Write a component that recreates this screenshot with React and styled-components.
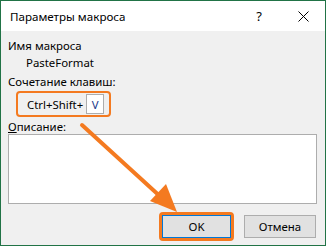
import styled, { createGlobalStyle } from "styled-components";

const Global = createGlobalStyle`
  html, body {
    margin: 0;
    padding: 0;
    background: #ffffff;
  }
  * {
    box-sizing: border-box;
  }
`;

const Dialog = styled.div`
  position: relative;
  width: 326px;
  height: 246px;
  border: 1px solid #217346;
  background: #f0f0f0;
  font-family: "Noto Sans", "Liberation Sans", sans-serif;
  font-size: 11.4px;
  color: #000;
  display: flex;
  flex-direction: column;
  overflow: hidden;
`;

const TitleBar = styled.div`
  height: 30px;
  flex: none;
  background: #ffffff;
  display: flex;
  align-items: center;
  padding-left: 9px;
`;

const Title = styled.div`
  flex: 1;
  font-size: 11.6px;
  color: #000;
`;

const TitleButton = styled.div`
  width: 44px;
  height: 30px;
  display: flex;
  align-items: center;
  justify-content: center;
  font-size: 13px;
  color: #000;
`;

const Body = styled.div`
  flex: 1;
  padding: 6px 7px 0 7px;
  display: flex;
  flex-direction: column;
`;

const Label = styled.div`
  height: 17px;
  line-height: 17px;
  margin-top: ${(p) => p.$mt || 0}px;
`;

const Value = styled.div`
  height: 17px;
  line-height: 17px;
  padding-left: 18px;
`;

const Highlight = styled.div`
  align-self: flex-start;
  height: 26px;
  margin-left: 8px;
  margin-top: 1px;
  border: 2px solid #f47a20;
  border-radius: 4px;
  padding: 0 5px 0 9px;
  display: flex;
  align-items: center;
  gap: 3px;
`;

const KeyInput = styled.div`
  width: 18px;
  height: 20px;
  background: #fff;
  border: 1px solid #adadad;
  display: flex;
  align-items: center;
  justify-content: center;
  color: #1a3a8a;
`;

const Under = styled.span`
  text-decoration: underline;
`;

const TextArea = styled.div`
  height: 70px;
  flex: none;
  margin-top: -1px;
  margin-right: 1px;
  background: #fff;
  border: 1px solid #adadad;
`;

const Buttons = styled.div`
  display: flex;
  justify-content: flex-end;
  align-items: center;
  gap: 10px;
  margin-top: 8px;
  padding-right: 2px;
`;

const OkWrap = styled.div`
  border: 3px solid #f47a20;
  border-radius: 4px;
`;

const Button = styled.div`
  width: ${(p) => p.$w}px;
  height: 23px;
  display: flex;
  align-items: center;
  justify-content: center;
  background: #e1e1e1;
  border: 1px solid ${(p) => (p.$primary ? "#0078d7" : "#adadad")};
`;

const Overlay = styled.svg`
  position: absolute;
  left: -1px;
  top: -1px;
  pointer-events: none;
`;

export default function App() {
  return (
    <>
      <Global />
      <Dialog>
        <TitleBar>
          <Title>Параметры макроса</Title>
          <TitleButton>?</TitleButton>
          <TitleButton>
            <svg width="11" height="11" viewBox="0 0 11 11">
              <path d="M0.5 0.5L10.5 10.5M10.5 0.5L0.5 10.5" stroke="#000" strokeWidth="1" />
            </svg>
          </TitleButton>
        </TitleBar>
        <Body>
          <Label>Имя макроса</Label>
          <Value>PasteFormat</Value>
          <Label $mt={2}>Сочетание клавиш:</Label>
          <Highlight>
            <span>Ctrl+Shift+</span>
            <KeyInput>V</KeyInput>
          </Highlight>
          <Label $mt={1}>
            <Under>О</Under>писание:
          </Label>
          <TextArea />
          <Buttons>
            <OkWrap>
              <Button $w={69} $primary>
                OK
              </Button>
            </OkWrap>
            <Button $w={72}>Отмена</Button>
          </Buttons>
        </Body>
        <Overlay width="326" height="246" viewBox="0 0 326 246">
          <line x1="82" y1="125" x2="163" y2="199" stroke="#f47a20" strokeWidth="4" strokeLinecap="round" />
          <polygon points="177,212 150,201 166,184" fill="#f47a20" />
        </Overlay>
      </Dialog>
    </>
  );
}
